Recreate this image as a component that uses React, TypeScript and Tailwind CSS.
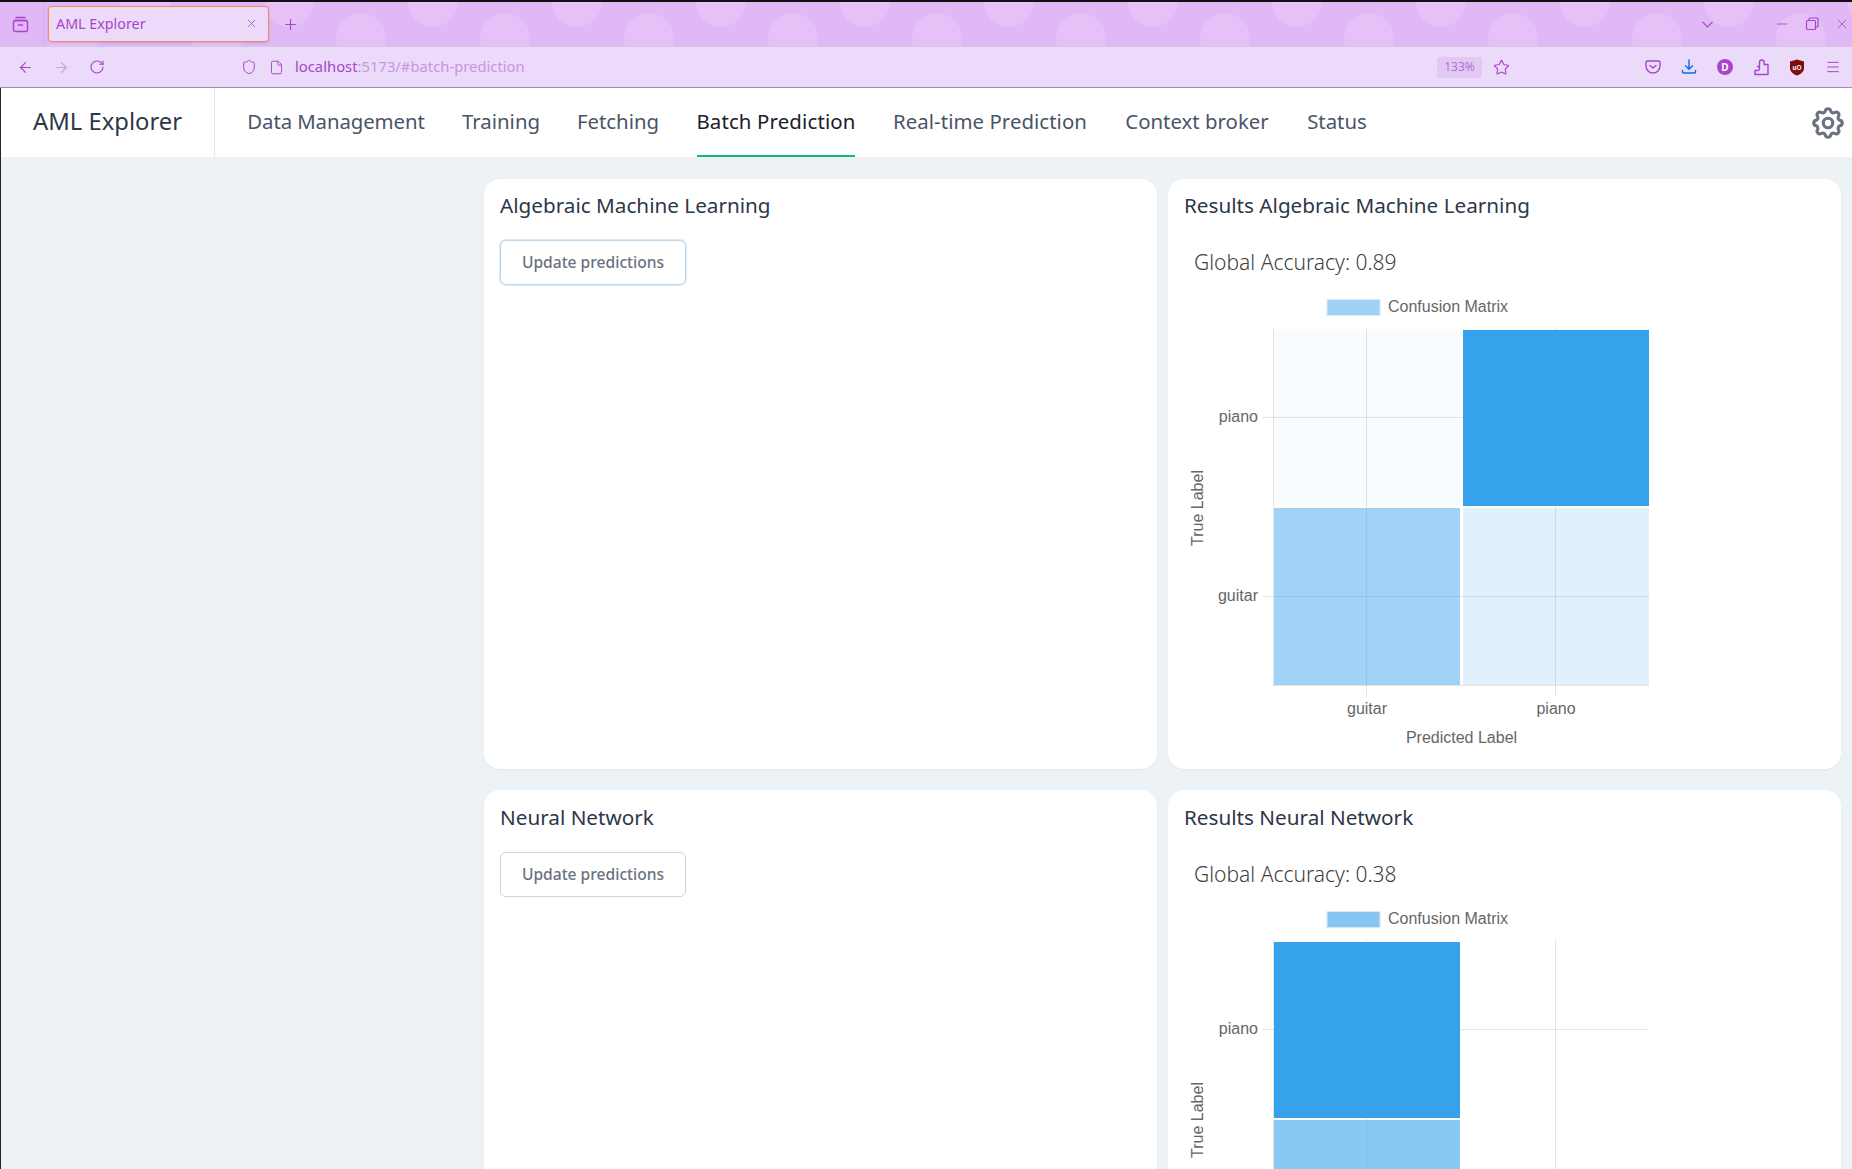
import { ArrowLeft, ArrowRight, RotateCw, Shield, File, Star, Menu, X, Plus, ChevronDown, Minus } from "lucide-react";
import { HiOutlineCog } from "react-icons/hi";

const tabs = [
  { label: "Data Management", w: "w-[178px] tracking-[-0.1px]" },
  { label: "Training", w: "w-[76px]" },
  { label: "Fetching", w: "w-[82px]" },
  { label: "Batch Prediction", w: "w-[158px] tracking-[0.15px]" },
  { label: "Real-time Prediction", w: "w-[194px] tracking-[0.05px]" },
  { label: "Context broker", w: "w-[144px]" },
  { label: "Status", w: "w-[60px]" },
];

type Cell = { x: number; y: number; h: number; alpha: number };

function Chart({ legend, cells }: { legend: string; cells: Cell[] }) {
  return (
    <svg width="500" height="470" className="ml-[-16px] mt-[12px] block" style={{ fontFamily: "'Liberation Sans', sans-serif" }}>
      <rect x="159" y="9.5" width="53" height="16" fill={legend} stroke="#d5ebfb" strokeWidth="1" />
      <text x="220" y="22" fontSize="16" fill="#666">Confusion Matrix</text>
      <g stroke="#000" strokeOpacity="0.1" strokeWidth="1">
        <line x1="105.5" y1="38" x2="105.5" y2="396" />
        <line x1="198.5" y1="38" x2="198.5" y2="407" />
        <line x1="387.5" y1="38" x2="387.5" y2="407" />
        <line x1="94" y1="127.5" x2="481" y2="127.5" />
        <line x1="94" y1="306.5" x2="481" y2="306.5" />
        <line x1="105" y1="395.5" x2="481" y2="395.5" />
      </g>
      {cells.map((c, i) => (
        <rect key={i} x={c.x} y={c.y} width="186" height={c.h} fill="#36a2eb" fillOpacity={c.alpha} />
      ))}
      <g fontSize="16" fill="#666">
        <text x="90" y="132" textAnchor="end">piano</text>
        <text x="90" y="311" textAnchor="end">guitar</text>
        <text x="199" y="424" textAnchor="middle">guitar</text>
        <text x="388" y="424" textAnchor="middle">piano</text>
        <text x="293.5" y="453" textAnchor="middle">Predicted Label</text>
        <text transform="translate(35 218) rotate(-90)" textAnchor="middle">True Label</text>
      </g>
    </svg>
  );
}

function Card({ title, lower, children }: { title: string; lower?: boolean; children?: React.ReactNode }) {
  return (
    <div className={"h-[590px] rounded-2xl bg-white px-4 shadow-[0_1px_2px_rgba(0,0,0,0.05)] " + (lower ? "pt-[11px]" : "pt-[10px]")}>
      <h2 className="text-[20.7px] leading-[32px] text-[#2d3748]">{title}</h2>
      {children}
    </div>
  );
}

function UpdateButton({ focus }: { focus?: boolean }) {
  return (
    <button className={"mt-[19px] flex h-[45px] w-[186px] items-center justify-center rounded-md border bg-white text-[15.6px] font-medium text-[#6b7280] " + (focus ? "border-[#bcd6ea] shadow-[0_0_0_1px_#d8ecfa]" : "border-[#cbd5e0]")}>
      Update predictions
    </button>
  );
}

function Results({ value, legend, cells }: { value: string; legend: string; cells: Cell[] }) {
  return (
    <div>
      <div className="mt-[25px] pl-[10px] text-[21px] font-light leading-[32px] text-[#3f3f3f]">{value}</div>
      <Chart legend={legend} cells={cells} />
    </div>
  );
}

export default function App() {
  return (
    <div className="flex h-[1169px] w-full flex-col overflow-hidden bg-[#edf2f7] font-['Noto_Sans',sans-serif]">
      <div className="h-[2px] shrink-0 bg-[#130e14]" />
      {/* tab strip */}
      <div className="relative flex h-[45px] shrink-0 items-center border-b border-[#d9c4e8] bg-[#dfb8f5] text-[#a845c8]">
        <svg className="absolute inset-0 h-full w-full" aria-hidden="true">
          <defs>
            <pattern id="dots" width="144" height="45" patternUnits="userSpaceOnUse" x="-143">
              <circle cx="0" cy="0" r="25" fill="#e5c1f7" />
              <circle cx="144" cy="0" r="25" fill="#e5c1f7" />
              <circle cx="72" cy="36" r="25" fill="#e5c1f7" />
            </pattern>
          </defs>
          <rect width="100%" height="100%" fill="url(#dots)" />
        </svg>
        <div className="relative flex h-full w-[44px] shrink-0 items-center justify-center border-r border-[#d3b3e6] bg-[#dfb8f5]">
          <svg width="17" height="17" viewBox="0 0 17 17" fill="none" stroke="currentColor" strokeWidth="1.4" strokeLinecap="round" className="ml-[-3px]">
            <path d="M4 1.5h9M2.5 4.5h12" />
            <rect x="1.5" y="4.5" width="14" height="11" rx="2" />
            <path d="M6.5 9h4" />
          </svg>
        </div>
        <div className="relative mb-px ml-[4px] flex h-[36px] w-[221px] items-center justify-between rounded-[4px] border border-[#f08a5d] bg-[#ecdafa] pl-[7px] pr-[10px] shadow-sm">
          <span className="text-[14.3px] text-[#a845c8]">AML Explorer</span>
          <X size={13} strokeWidth={1.5} />
        </div>
        <Plus size={17} strokeWidth={1.6} className="relative ml-[13px]" />
        <div className="relative ml-auto flex items-center">
          <ChevronDown size={19} strokeWidth={1.5} />
          <Minus size={16} strokeWidth={1.3} className="ml-[57px]" />
          <svg width="14" height="14" viewBox="0 0 14 14" fill="none" stroke="currentColor" strokeWidth="1.2" className="ml-[15px]">
            <rect x="1.5" y="3.5" width="9" height="9" rx="1" />
            <path d="M4 3.5V2a1 1 0 0 1 1-1h7a1 1 0 0 1 1 1v7a1 1 0 0 1-1 1h-1.5" />
          </svg>
          <X size={16} strokeWidth={1.2} className="ml-[15px] mr-[2px]" />
        </div>
      </div>
      {/* url bar */}
      <div className="flex h-[41px] shrink-0 items-center border-b border-[#a58ac0] bg-[#ebdaf9] text-[#a845c8]">
        <ArrowLeft size={17} strokeWidth={1.6} className="ml-[17px]" />
        <ArrowRight size={17} strokeWidth={1.6} className="ml-[19px] opacity-40" />
        <RotateCw size={16} strokeWidth={1.6} className="ml-[19px]" />
        <Shield size={16} strokeWidth={1.5} className="ml-[136px]" />
        <File size={15} strokeWidth={1.5} className="ml-[12px]" />
        <div className="ml-[11px] pb-px text-[14.8px] leading-none text-[#c995df]">
          <span className="text-[#a845c8]">localhost</span>:5173/#batch-prediction
        </div>
        <div className="ml-auto flex items-center">
          <div className="flex h-[21px] w-[45px] items-center justify-center rounded-[3px] bg-[#e2c9f4] text-[12px] text-[#b46fd3]">133%</div>
          <Star size={17} strokeWidth={1.6} className="ml-[11px]" />
          <svg width="16" height="16" viewBox="0 0 16 16" fill="none" stroke="currentColor" strokeWidth="1.4" className="ml-[135px]">
            <path d="M2.5 2h11A1.5 1.5 0 0 1 15 3.5V7a7 7 0 0 1-14 0V3.5A1.5 1.5 0 0 1 2.5 2Z" />
            <path d="M5 6.5 8 9l3-2.5" strokeLinecap="round" strokeLinejoin="round" />
          </svg>
          <svg width="16" height="16" viewBox="0 0 16 16" fill="none" stroke="#0a6cf0" strokeWidth="1.4" strokeLinecap="round" strokeLinejoin="round" className="ml-[20px]">
            <path d="M8 1v9M4.5 6.8 8 10.3l3.5-3.5M1.5 11.5v1.5a1 1 0 0 0 1 1h11a1 1 0 0 0 1-1v-1.5" />
          </svg>
          <div className="ml-[20px] flex h-4 w-4 items-center justify-center rounded-full bg-[#a845c8] text-[10px] font-bold leading-none text-white">D</div>
          <svg width="16" height="17" viewBox="0 0 16 17" fill="none" stroke="currentColor" strokeWidth="1.4" strokeLinejoin="round" className="ml-[20px]">
            <path d="M6.5 5.5V3.3a2.3 2.3 0 0 1 4.6 0V5.5H15V15.5H2V11.5H4.5a2 2 0 0 0 0-4H6.5Z" />
          </svg>
          <svg width="16" height="17" viewBox="0 0 16 17" className="ml-[20px]">
            <path d="M8 .5 15 2.5V9c0 3.5-3 6-7 7.5C4 15 1 12.5 1 9V2.5Z" fill="#7d0c0c" />
            <text x="8" y="10.5" textAnchor="middle" fontSize="6.5" fontWeight="700" fill="#fff" fontFamily="'Liberation Sans', sans-serif">uO</text>
          </svg>
          <Menu size={16} strokeWidth={1.5} className="ml-[20px] mr-[11px]" />
        </div>
      </div>
      <div className="min-h-0 flex-1 border-l border-[#2b2426]">
        {/* app nav */}
        <nav className="flex h-[69px] items-stretch bg-white">
          <div className="flex w-[214px] shrink-0 items-center border-r border-[#e2e8f0] pb-px pl-[32px] text-[23.8px] text-[#2d3748]">AML Explorer</div>
          <div className="ml-[32px] flex gap-[38px]">
            {tabs.map((t) => (
              <div key={t.label} className={"flex items-center justify-center whitespace-nowrap border-b-2 text-[20.4px] " + t.w + " " + (t.label === "Batch Prediction" ? "border-[#10b981] text-[#1a202c]" : "border-transparent text-[#4a5568]")}>
                {t.label}
              </div>
            ))}
          </div>
          <div className="ml-auto mr-[5px] flex items-center text-[#6b7280]">
            <HiOutlineCog size={38} />
          </div>
        </nav>
        {/* content */}
        <main className="grid grid-cols-2 gap-x-[11px] gap-y-[21px] pl-[483px] pr-[11px] pt-[22px]">
          <Card title="Algebraic Machine Learning"><UpdateButton focus /></Card>
          <Card title="Results Algebraic Machine Learning">
            <Results value="Global Accuracy: 0.89" legend="#a0d2f6" cells={[
              { x: 106, y: 40, h: 176, alpha: 0.035 },
              { x: 295, y: 40, h: 176, alpha: 1 },
              { x: 106, y: 218, h: 177, alpha: 0.47 },
              { x: 295, y: 218, h: 177, alpha: 0.15 },
            ]} />
          </Card>
          <Card title="Neural Network" lower><UpdateButton /></Card>
          <Card title="Results Neural Network" lower>
            <Results value="Global Accuracy: 0.38" legend="#88c6f2" cells={[
              { x: 106, y: 40, h: 176, alpha: 1 },
              { x: 106, y: 218, h: 177, alpha: 0.59 },
            ]} />
          </Card>
        </main>
      </div>
    </div>
  );
}
